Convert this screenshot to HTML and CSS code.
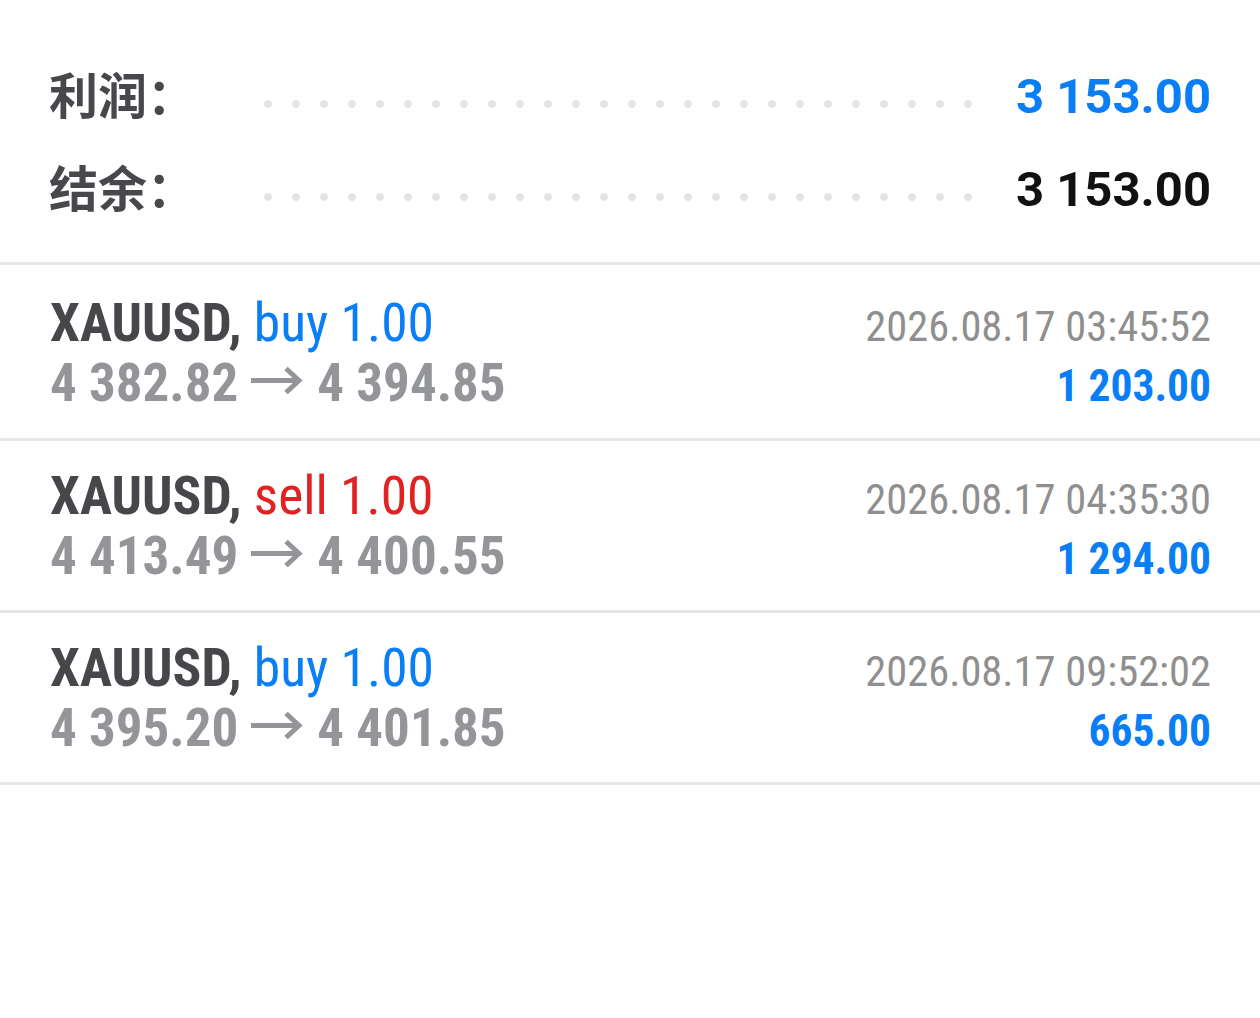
FILE: index.html
```html
<!DOCTYPE html>
<html lang="zh">
<head>
<meta charset="utf-8">
<title>交易历史</title>
<link rel="stylesheet" href="styles.css">
</head>
<body>
<div class="page">
  <section class="summary">
    <div class="sum-row">
      <span class="sum-label">利润：</span>
      <span class="dots"></span>
      <span class="sum-value blue">3 153.00</span>
    </div>
    <div class="sum-row">
      <span class="sum-label">结余：</span>
      <span class="dots"></span>
      <span class="sum-value black">3 153.00</span>
    </div>
  </section>

  <ul class="trades">
    <li class="trade first">
      <div class="t-title"><b>XAUUSD,</b> <span class="buy">buy 1.00</span></div>
      <div class="t-date">2026.08.17 03:45:52</div>
      <div class="t-prices">4 382.82<svg class="arrow" viewBox="0 0 52 28" width="52" height="28" aria-hidden="true"><path d="M0 14.5H47" stroke="currentColor" stroke-width="5" fill="none"/><path d="M35 2.5L48 14.5L35 26.5" stroke="currentColor" stroke-width="5" fill="none" stroke-linejoin="miter"/></svg>4 394.85</div>
      <div class="t-profit">1 203.00</div>
    </li>
    <li class="trade">
      <div class="t-title"><b>XAUUSD,</b> <span class="sell">sell 1.00</span></div>
      <div class="t-date">2026.08.17 04:35:30</div>
      <div class="t-prices">4 413.49<svg class="arrow" viewBox="0 0 52 28" width="52" height="28" aria-hidden="true"><path d="M0 14.5H47" stroke="currentColor" stroke-width="5" fill="none"/><path d="M35 2.5L48 14.5L35 26.5" stroke="currentColor" stroke-width="5" fill="none" stroke-linejoin="miter"/></svg>4 400.55</div>
      <div class="t-profit">1 294.00</div>
    </li>
    <li class="trade">
      <div class="t-title"><b>XAUUSD,</b> <span class="buy">buy 1.00</span></div>
      <div class="t-date">2026.08.17 09:52:02</div>
      <div class="t-prices">4 395.20<svg class="arrow" viewBox="0 0 52 28" width="52" height="28" aria-hidden="true"><path d="M0 14.5H47" stroke="currentColor" stroke-width="5" fill="none"/><path d="M35 2.5L48 14.5L35 26.5" stroke="currentColor" stroke-width="5" fill="none" stroke-linejoin="miter"/></svg>4 401.85</div>
      <div class="t-profit">665.00</div>
    </li>
  </ul>
</div>
</body>
</html>
```

FILE: styles.css
```css
html, body {
  margin: 0;
  padding: 0;
  background: #ffffff;
}

.page {
  width: 1260px;
  min-height: 1018px;
  font-family: "Roboto", "Noto Sans CJK SC", sans-serif;
}

.summary {
  padding: 50px 49px 26px 49px;
}

.sum-row {
  display: flex;
  align-items: flex-start;
  height: 93px;
}

.sum-label {
  width: 215px;
  flex: none;
  margin-top: -4px;
  font-family: "Noto Sans CJK SC", sans-serif;
  font-weight: 700;
  font-size: 49px;
  line-height: 93px;
  color: #48484c;
  white-space: nowrap;
}

.dots {
  flex: 1;
  height: 93px;
  margin-right: 42px;
  background-image: radial-gradient(circle at 4px 4px, #e3e3e3 3.4px, rgba(227,227,227,0) 4.4px);
  background-size: 28px 8px;
  background-repeat: repeat-x;
  background-position: 0 50px;
}

.sum-value {
  flex: none;
  font-weight: 700;
  font-size: 49px;
  line-height: 93px;
}

.blue { color: #0a7ef5; }
.black { color: #111111; }

.trades {
  list-style: none;
  margin: 0;
  padding: 0;
  border-bottom: 3px solid #e6e6e6;
}

.trade {
  display: grid;
  grid-template-columns: 1fr auto;
  grid-template-rows: 61px 61px;
  align-items: baseline;
  height: 169px;
  box-sizing: content-box;
  padding: 0 49px 0 50px;
  border-top: 3px solid #e6e6e6;
  font-family: "Roboto Condensed", "Roboto", sans-serif;
}

.trade > div {
  padding-top: 24px;
}

.trade.first {
  padding-top: 3px;
  height: 170px;
}

.t-title {
  font-size: 53.5px;
  line-height: 61px;
  color: #47474b;
  white-space: nowrap;
}

.t-title b {
  font-weight: 700;
}

.buy { color: #0a7ef5; font-weight: 400; }
.sell { color: #e02222; font-weight: 400; }

.t-prices {
  font-size: 53px;
  line-height: 61px;
  font-weight: 700;
  color: #939598;
  white-space: nowrap;
}

.arrow {
  display: inline-block;
  vertical-align: 7px;
  margin: 0 14px 0 13px;
}

.t-date {
  font-size: 42.5px;
  line-height: 61px;
  color: #8f8f8f;
  text-align: right;
  white-space: nowrap;
}

.t-profit {
  font-size: 43.5px;
  line-height: 61px;
  font-weight: 700;
  color: #0a7ef5;
  text-align: right;
  white-space: nowrap;
}
```
